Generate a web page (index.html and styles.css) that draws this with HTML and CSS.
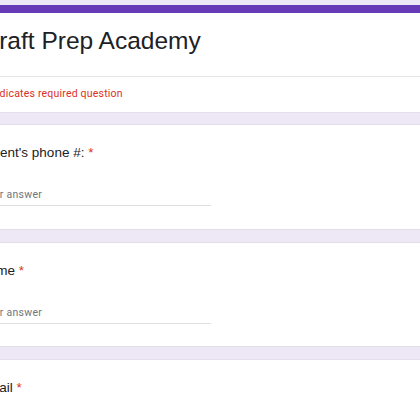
FILE: index.html
```html
<!DOCTYPE html>
<html>
<head>
<meta charset="utf-8">
<link rel="stylesheet" href="styles.css">
</head>
<body>
<div class="form">
  <div class="header card">
    <div class="title">Craft Prep Academy</div>
    <div class="required-note">* Indicates required question</div>
  </div>
  <div class="card question">
    <div class="label">Parent's phone #: <span class="star">*</span></div>
    <div class="input"><span class="placeholder">Your answer</span></div>
  </div>
  <div class="card question">
    <div class="label">Name <span class="star">*</span></div>
    <div class="input"><span class="placeholder">Your answer</span></div>
  </div>
  <div class="card question">
    <div class="label">Email <span class="star">*</span></div>
    <div class="input"><span class="placeholder">Your answer</span></div>
  </div>
</div>
</body>
</html>
```
FILE: styles.css
```css
html, body {
  margin: 0;
  padding: 0;
  background: #ede7f6;
  overflow: hidden;
  height: 420px;
}
body {
  padding-top: 5px;
  box-sizing: border-box;
}
.form {
  margin-left: -44px;
  width: 520px;
  display: flex;
  flex-direction: column;
  gap: 12px;
}
.card {
  background: #ffffff;
  border: 1px solid #e2dfea;
  box-sizing: border-box;
}
.header {
  border-top: 8px solid #673ab7;
  margin-bottom: -1px;
}
.title {
  font-family: "Liberation Sans", Arial, sans-serif;
  font-size: 24.5px;
  line-height: 32px;
  color: #202124;
  padding: 12px 0 19px 24.5px;
  border-bottom: 1px solid #e6e6e6;
}
.required-note {
  font-family: Roboto, "Liberation Sans", sans-serif;
  font-size: 10.5px;
  letter-spacing: 0.2px;
  line-height: 14px;
  color: #d93025;
  padding: 10px 0 11px 26px;
}
.question {
  padding: 20px 0 21px 22px;
  height: 105.5px;
}
.label {
  font-family: "Liberation Sans", Arial, sans-serif;
  font-size: 13.5px;
  line-height: 16px;
  color: #202124;
}
.star {
  color: #d93025;
}
.input {
  margin: 27px 0 0 2px;
  width: 230px;
  padding-bottom: 3px;
  border-bottom: 1px solid #e0e0e0;
}
.placeholder {
  display: block;
  font-family: Roboto, "Liberation Sans", sans-serif;
  font-size: 10.5px;
  letter-spacing: 0.3px;
  line-height: 14px;
  color: #70757a;
}
```
